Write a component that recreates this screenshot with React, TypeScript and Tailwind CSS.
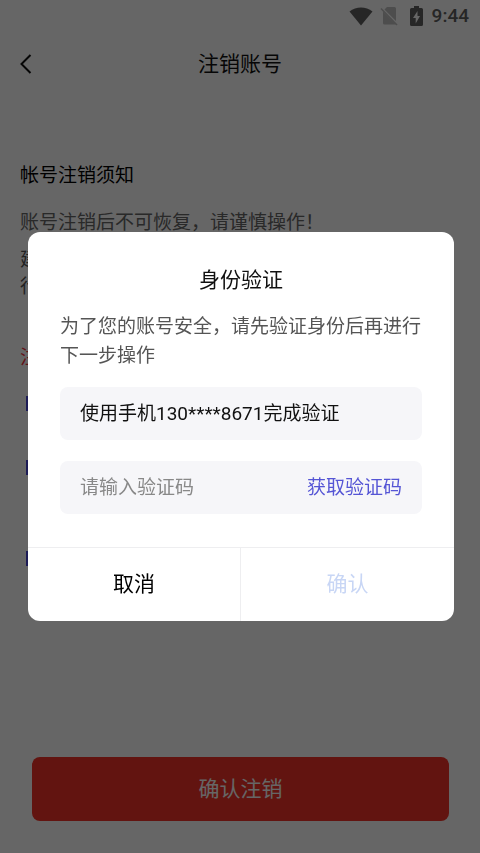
const notices = [
  { id: "first", className: "h-[64px]" },
  { id: "second", className: "h-[91px]" },
  { id: "third", className: "h-[15px]" },
];

function StatusBar() {
  return (
    <div className="flex h-8 items-center justify-end pr-[11px] text-[#606060]">
      <svg className="h-[19px] w-6" viewBox="0 0 24 19" fill="currentColor" aria-hidden="true">
        <path d="M0.5 4.5C7-1 17-1 23.5 4.5L12 18.5Z" />
      </svg>
      <svg className="ml-[7px] h-5 w-[18px]" viewBox="0 0 18 20" aria-hidden="true">
        <path d="M7 1h7.500A1.500 1.500 0 0 1 16 2.500V15L4.500 3.500ZM3 5.500l13 13H4.500A1.500 1.500 0 0 1 3 17Z" fill="#c0c0c0" />
        <path d="M1 2.500 17 19" stroke="#c0c0c0" strokeWidth="1.500" />
      </svg>
      <svg className="ml-3 h-5 w-[13px]" viewBox="0 0 13 20" aria-hidden="true">
        <path
          d="M4 0h5v2h2.500A1.500 1.500 0 0 1 13 3.500v15a1.500 1.500 0 0 1-1.500 1.500h-10A1.500 1.500 0 0 1 0 18.500v-15A1.500 1.500 0 0 1 1.500 2H4ZM7.500 5 3 12h2.700v5.500L10 10H7.500Z"
          fill="currentColor"
          fillRule="evenodd"
        />
      </svg>
      <span className="ml-[9px] font-[Roboto,sans-serif] text-[19px] font-medium leading-8">9:44</span>
    </div>
  );
}

function AccountPage() {
  return (
    <div className="flex min-h-screen flex-col bg-white">
      <StatusBar />
      <header className="grid h-16 grid-cols-[48px_1fr_48px] items-center">
        <button type="button" aria-label="返回" className="flex h-12 items-center pl-5">
          <svg className="h-5 w-3" viewBox="0 0 12 20" fill="none" stroke="#111" strokeWidth="2" aria-hidden="true">
            <path d="M10.500 1 1.500 10l9 9" />
          </svg>
        </button>
        <h1 className="text-center text-[21px] leading-8 text-[#111]">注销账号</h1>
      </header>
      <main className="flex-1 px-5 pt-16">
        <h2 className="text-[19px] leading-8 text-black">帐号注销须知</h2>
        <p className="mt-[15px] text-[19px] leading-8 text-[#666]">账号注销后不可恢复，请谨慎操作！</p>
        <p className="mt-[7px] text-[19px] leading-[27px] text-[#555]">
          建<br />行
        </p>
        <p className="mt-[42px] text-[19px] leading-8 text-[#f5323c]">注</p>
        <ul className="mt-[22px] pl-[6px]">
          {notices.map((n) => (
            <li key={n.id} className={n.className}>
              <span className="block h-[15px] w-1 bg-[#4a48d8]" />
            </li>
          ))}
        </ul>
      </main>
      <footer className="pb-8 pl-8 pr-[31px]">
        <button type="button" className="h-16 w-full rounded-lg bg-[#f53228] pt-[2px] text-[21px] text-white">
          确认注销
        </button>
      </footer>
    </div>
  );
}

function VerifyDialog() {
  return (
    <div className="fixed inset-0 flex items-center bg-black/60 pl-7 pr-[26px]">
      <section role="dialog" aria-modal="true" aria-labelledby="verify-title" className="w-full overflow-hidden rounded-xl bg-white pt-8">
        <div className="px-8 pb-[33px]">
          <h2 id="verify-title" className="text-center text-[21px] leading-8 text-[#111]">
            身份验证
          </h2>
          <p className="mt-4 text-[19px] leading-[29px] text-[#555]">为了您的账号安全，请先验证身份后再进行下一步操作</p>
          <p className="mt-[17px] rounded-lg bg-[#f6f6f9] px-5 text-[19px] leading-[53px] text-[#111]">使用手机130****8671完成验证</p>
          <div className="mt-[21px] flex h-[53px] items-center rounded-lg bg-[#f6f6f9] px-5">
            <input
              type="text"
              aria-label="验证码"
              placeholder="请输入验证码"
              className="h-full min-w-0 flex-1 bg-transparent text-[19px] outline-none placeholder:text-[#888]"
            />
            <button type="button" className="h-full pt-[2px] text-[19px] text-[#5555d5]">
              获取验证码
            </button>
          </div>
        </div>
        <div className="grid h-[74px] grid-cols-2 border-t border-[#eeeef0] text-[21px]">
          <button type="button" className="border-r border-[#eeeef0] text-black">
            取消
          </button>
          <button type="button" className="text-[#c8d6f5]">
            确认
          </button>
        </div>
      </section>
    </div>
  );
}

export default function App() {
  return (
    <div className="font-[Roboto,'Noto_Sans_CJK_SC',sans-serif]" lang="zh-CN">
      <AccountPage />
      <VerifyDialog />
    </div>
  );
}
